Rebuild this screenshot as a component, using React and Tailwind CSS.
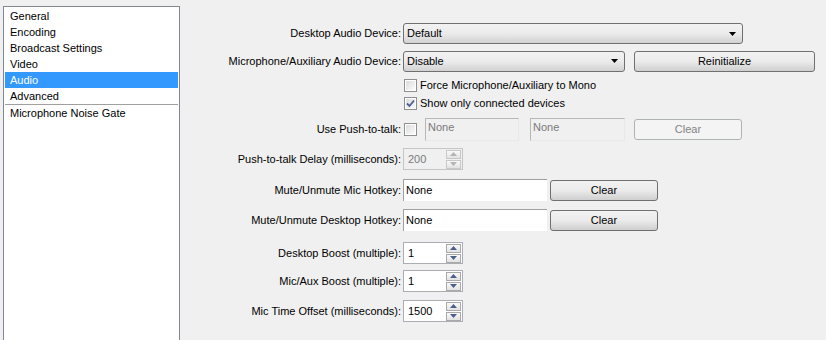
import React from 'react'

const font = { fontFamily: '"Liberation Sans", Arial, sans-serif' }

function Arrow({ up, disabled }) {
  const c = disabled ? '#b4b4b4' : '#4a5f8a'
  return (
    <svg width="7" height="4" viewBox="0 0 7 4">
      {up ? <path d="M0 4 L3.5 0 L7 4 Z" fill={c} /> : <path d="M0 0 L7 0 L3.5 4 Z" fill={c} />}
    </svg>
  )
}

function Combo({ value, w }) {
  return (
    <div className={`${w} h-[21px] flex items-center justify-between rounded-[3px] border border-[#707070] bg-gradient-to-b from-[#f2f2f2] via-[#ebebeb] to-[#d2d2d2] pl-[3px] pr-[6px]`}>
      <span>{value}</span>
      <svg width="7" height="4" viewBox="0 0 7 4"><path d="M0 0 L7 0 L3.5 4 Z" fill="#000" /></svg>
    </div>
  )
}

function Button({ label, w, disabled }) {
  if (disabled) {
    return (
      <div className={`${w} h-[21px] flex items-center justify-center rounded-[3px] border border-[#adb2b5] bg-[#f4f4f4] text-[#838383]`}>{label}</div>
    )
  }
  return (
    <div className={`${w} h-[21px] flex items-center justify-center rounded-[3px] border border-[#707070] bg-gradient-to-b from-[#f2f2f2] via-[#ebebeb] to-[#cfcfcf]`}>{label}</div>
  )
}

function Check({ checked, disabled }) {
  return (
    <div className={`w-[13px] h-[13px] shrink-0 border ${disabled ? 'border-[#b1b1b1]' : 'border-[#8f8f8f]'} bg-white p-[1px]`}>
      <div className="w-full h-full bg-gradient-to-br from-[#dcdcdc] to-[#fbfbfb] flex items-center justify-center">
        {checked && (
          <svg width="9" height="9" viewBox="0 0 9 9">
            <path d="M1 4.5 L3.5 7 L8 1.5" fill="none" stroke="#4a5f97" strokeWidth="1.8" />
          </svg>
        )}
      </div>
    </div>
  )
}

function TextBox({ value, w, disabled }) {
  if (disabled) {
    return (
      <div className={`${w} h-[23px] flex items-center border border-[#b8b8b8] border-r-[#e8e8e8] border-b-[#e8e8e8] bg-[#f0f0f0] pl-[2px] pb-[4px] text-[#7a7a7a]`}>{value}</div>
    )
  }
  return (
    <div className={`${w} h-[22px] flex items-center border-t border-l border-[#a0a0a0] bg-white pl-[2px]`}>{value}</div>
  )
}

function Spin({ value, disabled }) {
  return (
    <div className={`w-[60px] h-[22px] flex items-center justify-between border ${disabled ? 'border-[#c5c5c5] bg-[#f0f0f0] text-[#7a7a7a]' : 'border-[#abadb3] bg-white'} pl-[4px] pr-[1px]`}>
      <span>{value}</span>
      <div className="flex flex-col gap-[1px]">
        <div className={`w-[15px] h-[9px] border ${disabled ? 'border-[#c8c8c8]' : 'border-[#a9a9a9]'} bg-gradient-to-b from-[#fafafa] to-[#e2e2e2] flex items-center justify-center`}><Arrow up disabled={disabled} /></div>
        <div className={`w-[15px] h-[9px] border ${disabled ? 'border-[#c8c8c8]' : 'border-[#a9a9a9]'} bg-gradient-to-b from-[#fafafa] to-[#e2e2e2] flex items-center justify-center`}><Arrow disabled={disabled} /></div>
      </div>
    </div>
  )
}

function Row({ label, mt, h, children }) {
  return (
    <div className={`flex items-center ${mt} ${h}`}>
      <div className="w-[221px] shrink-0 text-right">{label}</div>
      <div className="ml-[2px] flex items-center">{children}</div>
    </div>
  )
}

const items = ['General', 'Encoding', 'Broadcast Settings', 'Video', 'Audio', 'Advanced']

export default function App() {
  return (
    <div className="w-[826px] h-[340px] overflow-hidden bg-[#f0f0f0] text-[11px] text-black flex" style={font}>
      <div className="ml-[3px] mt-[6px] w-[177px] h-[360px] shrink-0 border border-[#828790] bg-white p-[1px]">
        {items.map(it => (
          <div key={it} className={`h-[16px] flex items-center pl-[5px] ${it === 'Audio' ? 'bg-[#3399ff] text-white' : ''}`}>{it}</div>
        ))}
        <div className="h-px bg-[#a0a0a0]" />
        <div className="h-[16px] flex items-center pl-[5px]">Microphone Noise Gate</div>
      </div>

      <div className="flex-1 flex flex-col pt-[23px]">
        <Row label="Desktop Audio Device:" h="h-[21px]">
          <Combo value="Default" w="w-[340px]" />
        </Row>
        <Row label="Microphone/Auxiliary Audio Device:" mt="mt-[6px]" h="h-[22px]">
          <Combo value="Disable" w="w-[222px]" />
          <div className="ml-[9px]"><Button label="Reinitialize" w="w-[181px]" /></div>
        </Row>
        <Row mt="mt-[6px]" h="h-[15px]">
          <div className="ml-[1px] flex items-center gap-[3px]"><Check /><span>Force Microphone/Auxiliary to Mono</span></div>
        </Row>
        <Row mt="mt-[3px]" h="h-[15px]">
          <div className="ml-[1px] flex items-center gap-[3px]"><Check checked /><span>Show only connected devices</span></div>
        </Row>
        <Row label="Use Push-to-talk:" mt="mt-[7px]" h="h-[23px]">
          <div className="ml-[1px]"><Check /></div>
          <div className="ml-[8px]"><TextBox value="None" w="w-[94px]" disabled /></div>
          <div className="ml-[11px]"><TextBox value="None" w="w-[95px]" disabled /></div>
          <div className="ml-[9px]"><Button label="Clear" w="w-[108px]" disabled /></div>
        </Row>
        <Row label="Push-to-talk Delay (milliseconds):" mt="mt-[7px]" h="h-[22px]">
          <Spin value="200" disabled />
        </Row>
        <Row label="Mute/Unmute Mic Hotkey:" mt="mt-[9px]" h="h-[22px]">
          <TextBox value="None" w="w-[144px]" />
          <div className="ml-[3px]"><Button label="Clear" w="w-[108px]" /></div>
        </Row>
        <Row label="Mute/Unmute Desktop Hotkey:" mt="mt-[8px]" h="h-[22px]">
          <TextBox value="None" w="w-[144px]" />
          <div className="ml-[3px]"><Button label="Clear" w="w-[108px]" /></div>
        </Row>
        <Row label="Desktop Boost (multiple):" mt="mt-[11px]" h="h-[22px]">
          <Spin value="1" />
        </Row>
        <Row label="Mic/Aux Boost (multiple):" mt="mt-[6px]" h="h-[22px]">
          <Spin value="1" />
        </Row>
        <Row label="Mic Time Offset (milliseconds):" mt="mt-[8px]" h="h-[22px]">
          <Spin value="1500" />
        </Row>
      </div>
    </div>
  )
}
